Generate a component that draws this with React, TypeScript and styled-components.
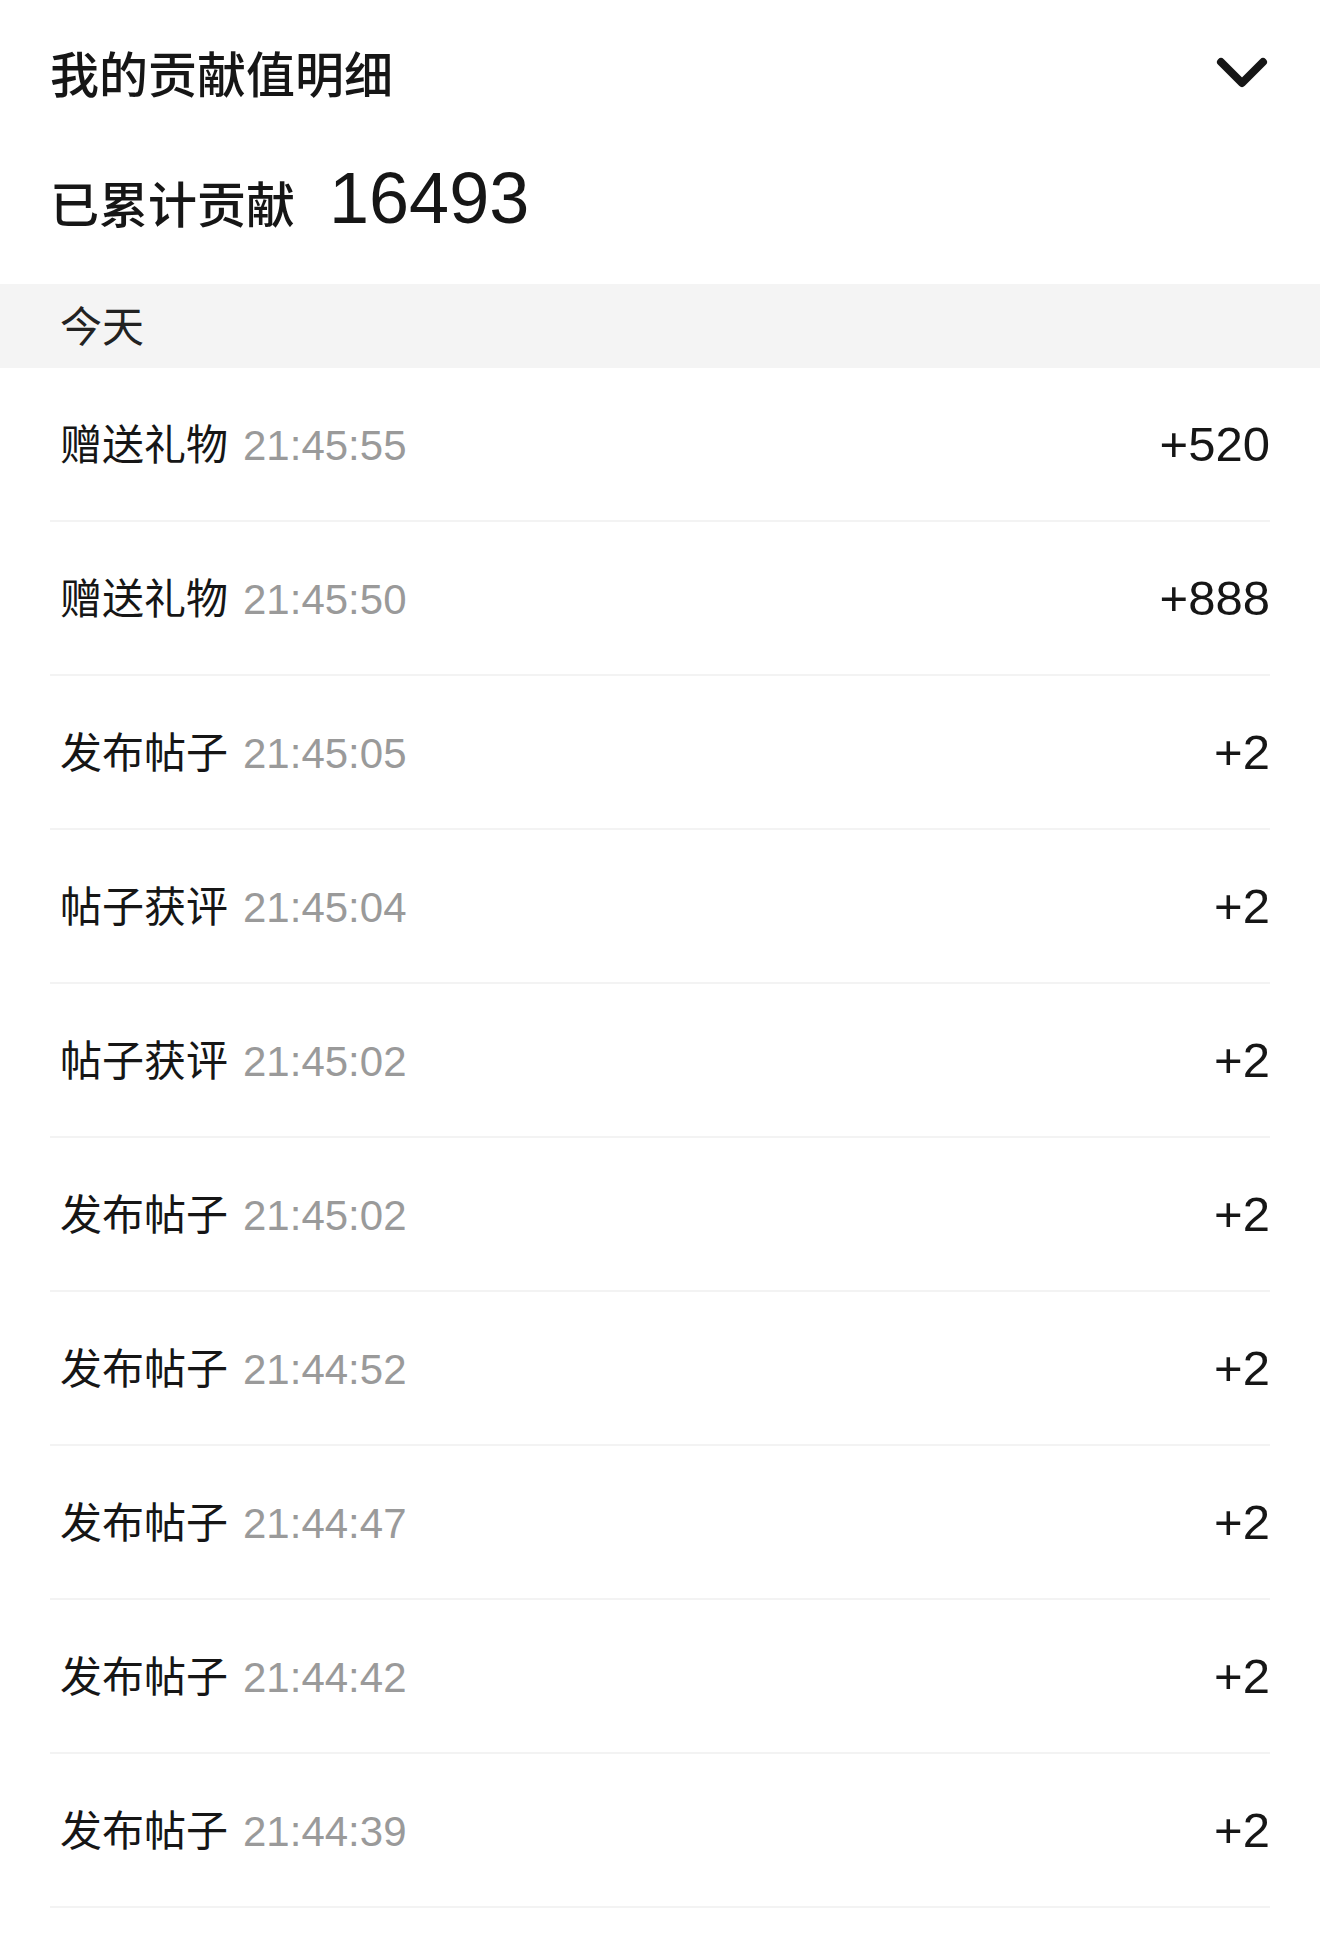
import React from 'react';
import styled, { createGlobalStyle } from 'styled-components';

const GlobalStyle = createGlobalStyle`
  html, body {
    margin: 0;
    padding: 0;
    background: #ffffff;
  }
  body {
    font-family: "Liberation Sans", "Noto Sans CJK SC", sans-serif;
    color: #161616;
  }
`;

const Page = styled.div`
  width: 1320px;
  min-height: 1953px;
  background: #ffffff;
`;

const TitleRow = styled.div`
  display: flex;
  align-items: center;
  justify-content: space-between;
  height: 148px;
  padding: 0 50px;
  box-sizing: border-box;
`;

const Title = styled.h1`
  margin: 0;
  padding-top: 4px;
  font-size: 49px;
  font-weight: 500;
  line-height: 1;
  color: #161616;
`;

const ToggleButton = styled.button`
  display: flex;
  align-items: center;
  justify-content: center;
  padding: 0;
  border: none;
  background: transparent;
  cursor: pointer;
`;

const SummaryRow = styled.div`
  display: flex;
  align-items: baseline;
  gap: 34px;
  height: 136px;
  padding: 10px 50px 0;
  box-sizing: border-box;
`;

const SummaryLabel = styled.span`
  font-size: 49px;
  font-weight: 500;
  line-height: 80px;
  color: #161616;
`;

const SummaryValue = styled.span`
  font-size: 72px;
  font-weight: 400;
  line-height: 80px;
  color: #161616;
`;

const DayBand = styled.div`
  display: flex;
  align-items: center;
  height: 84px;
  padding: 0 0 6px 60px;
  box-sizing: border-box;
  background: #f4f4f4;
  font-size: 42px;
  color: #222222;
`;

const List = styled.div`
  display: flex;
  flex-direction: column;
  padding: 0 50px;
`;

const Row = styled.div`
  display: flex;
  align-items: center;
  justify-content: space-between;
  height: 152px;
  padding-left: 10px;
  border-bottom: 2px solid #f3f3f3;
`;

const RowLeft = styled.div`
  display: flex;
  align-items: baseline;
  padding-bottom: 6px;
`;

const Action = styled.span`
  font-size: 42px;
  color: #161616;
`;

const Time = styled.span`
  margin-left: 15px;
  font-size: 42px;
  color: #9a9a9a;
`;

const Amount = styled.span`
  font-size: 49px;
  color: #161616;
`;

const records = [
  { action: '赠送礼物', time: '21:45:55', amount: 520 },
  { action: '赠送礼物', time: '21:45:50', amount: 888 },
  { action: '发布帖子', time: '21:45:05', amount: 2 },
  { action: '帖子获评', time: '21:45:04', amount: 2 },
  { action: '帖子获评', time: '21:45:02', amount: 2 },
  { action: '发布帖子', time: '21:45:02', amount: 2 },
  { action: '发布帖子', time: '21:44:52', amount: 2 },
  { action: '发布帖子', time: '21:44:47', amount: 2 },
  { action: '发布帖子', time: '21:44:42', amount: 2 },
  { action: '发布帖子', time: '21:44:39', amount: 2 },
];

function ChevronDown() {
  return (
    <svg width="56" height="36" viewBox="0 0 56 36" fill="none">
      <path
        d="M7 6 L28 27 L49 6"
        stroke="#161616"
        strokeWidth="8"
        strokeLinecap="round"
        strokeLinejoin="round"
      />
    </svg>
  );
}

export default function App() {
  return (
    <Page>
      <GlobalStyle />
      <TitleRow>
        <Title>我的贡献值明细</Title>
        <ToggleButton aria-label="收起">
          <ChevronDown />
        </ToggleButton>
      </TitleRow>

      <SummaryRow>
        <SummaryLabel>已累计贡献</SummaryLabel>
        <SummaryValue>16493</SummaryValue>
      </SummaryRow>

      <DayBand>今天</DayBand>

      <List>
        {records.map((r, i) => (
          <Row key={i}>
            <RowLeft>
              <Action>{r.action}</Action>
              <Time>{r.time}</Time>
            </RowLeft>
            <Amount>+{r.amount}</Amount>
          </Row>
        ))}
      </List>
    </Page>
  );
}
